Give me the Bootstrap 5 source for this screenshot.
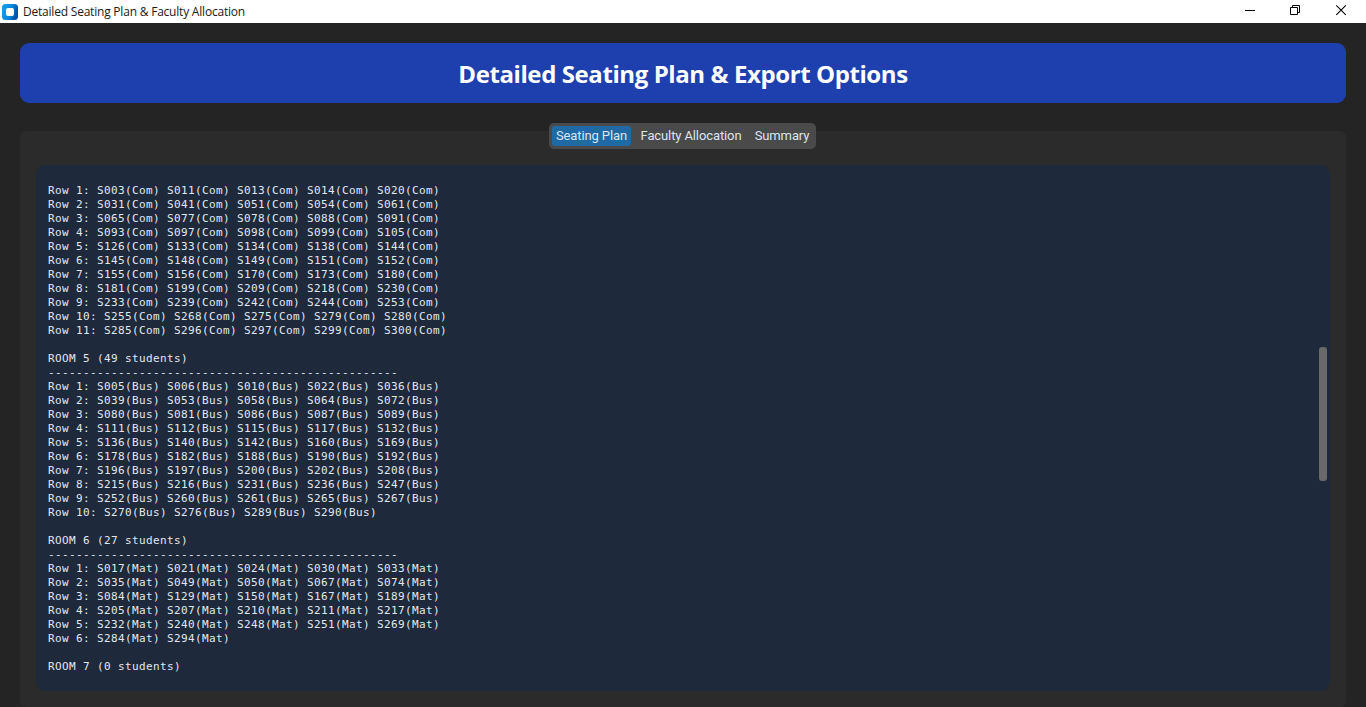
<!DOCTYPE html>
<html lang="en" data-bs-theme="dark">
<head>
<meta charset="utf-8">
<meta name="viewport" content="width=device-width, initial-scale=1">
<title>Detailed Seating Plan &amp; Faculty Allocation</title>
<link href="https://cdn.jsdelivr.net/npm/bootstrap@5.3.0/dist/css/bootstrap.min.css" rel="stylesheet">
<style>
body{background:#242424;font-family:"Open Sans","Noto Sans",sans-serif}
.titlebar{height:23px;background:#fff;color:#1a1a1a;padding-left:2px;font-size:12px;line-height:23px}
.titlebar .caption-text{margin-left:5px;letter-spacing:-.21px;white-space:nowrap}
.winctl{width:46px;height:23px}
.winctl.narrow{width:45px}
.winctl svg,.titlebar svg{display:block}
.main-area{padding:20px 20px 0}
.banner{height:60px;border-radius:9px;background:#1e40af;color:#fff}
.banner h1{font-size:24px;line-height:32px;letter-spacing:-.41px;padding-top:2px}
.seg{height:26px;padding:3px;margin:20px 1px 0 0;background:#4a4a4a;border-radius:5px;width:267px;position:relative;z-index:1}
.seg button{border:0;border-radius:3px;background:transparent;color:#dce4ee;font:13px/20px Roboto,sans-serif;letter-spacing:-.11px;padding:0;height:20px;white-space:nowrap}
.seg button.active{background:#1f6aa5}
.panel{margin-top:-18px;height:576px;background:#2b2b2b;border-radius:6px;padding:34px 16px 16px}
.viewer{height:526px;background:#1e293b;border-radius:9px;padding:19px 3px 0 12px}
.viewer pre{font:11px/14px "DejaVu Sans Mono",monospace;letter-spacing:.378px;color:#e2e8f0;overflow:hidden}
.thumb{width:8px;height:134px;margin-top:163px;border-radius:3px;background:#696969}
</style>
</head>
<body class="vh-100 overflow-hidden">
<header class="titlebar d-flex align-items-center">
  <svg width="16" height="16" viewBox="0 0 16 16"><defs><linearGradient id="g" x2="1" y2=".3"><stop offset=".2" stop-color="#0c9bf0"/><stop offset=".65" stop-color="#0784dc"/><stop offset="1" stop-color="#0450a0"/></linearGradient></defs><rect width="16" height="16" rx="3.5" fill="url(#g)"/><rect x="4" y="4" width="8" height="8" rx="2" fill="#fff"/></svg>
  <span class="caption-text">Detailed Seating Plan &amp; Faculty Allocation</span>
  <div class="d-flex ms-auto">
    <div class="winctl narrow"><svg width="45" height="23"><path d="M16 10.5h10" stroke="#000"/></svg></div>
    <div class="winctl"><svg width="46" height="23" fill="none" stroke="#000"><path d="M16.5 7.5h7v7h-7zM18.5 7.5v-2h7v7h-2"/></svg></div>
    <div class="winctl"><svg width="46" height="23"><path d="M16.3 5.3l9.5 9.5m0-9.5l-9.5 9.5" stroke="#000" stroke-width="1.1"/></svg></div>
  </div>
</header>
<main class="main-area">
  <div class="banner d-flex align-items-center justify-content-center"><h1 class="fw-bold mb-0">Detailed Seating Plan &amp; Export Options</h1></div>
  <div class="d-flex justify-content-center"><div class="seg d-flex" role="tablist">
    <button class="active" style="width:79px">Seating Plan</button>
    <button style="width:120px">Faculty Allocation</button>
    <button style="width:62px">Summary</button>
  </div></div>
  <section class="panel">
    <div class="viewer d-flex justify-content-between align-items-start">
<pre class="mb-0">Row 1: S003(Com) S011(Com) S013(Com) S014(Com) S020(Com)
Row 2: S031(Com) S041(Com) S051(Com) S054(Com) S061(Com)
Row 3: S065(Com) S077(Com) S078(Com) S088(Com) S091(Com)
Row 4: S093(Com) S097(Com) S098(Com) S099(Com) S105(Com)
Row 5: S126(Com) S133(Com) S134(Com) S138(Com) S144(Com)
Row 6: S145(Com) S148(Com) S149(Com) S151(Com) S152(Com)
Row 7: S155(Com) S156(Com) S170(Com) S173(Com) S180(Com)
Row 8: S181(Com) S199(Com) S209(Com) S218(Com) S230(Com)
Row 9: S233(Com) S239(Com) S242(Com) S244(Com) S253(Com)
Row 10: S255(Com) S268(Com) S275(Com) S279(Com) S280(Com)
Row 11: S285(Com) S296(Com) S297(Com) S299(Com) S300(Com)

ROOM 5 (49 students)
--------------------------------------------------
Row 1: S005(Bus) S006(Bus) S010(Bus) S022(Bus) S036(Bus)
Row 2: S039(Bus) S053(Bus) S058(Bus) S064(Bus) S072(Bus)
Row 3: S080(Bus) S081(Bus) S086(Bus) S087(Bus) S089(Bus)
Row 4: S111(Bus) S112(Bus) S115(Bus) S117(Bus) S132(Bus)
Row 5: S136(Bus) S140(Bus) S142(Bus) S160(Bus) S169(Bus)
Row 6: S178(Bus) S182(Bus) S188(Bus) S190(Bus) S192(Bus)
Row 7: S196(Bus) S197(Bus) S200(Bus) S202(Bus) S208(Bus)
Row 8: S215(Bus) S216(Bus) S231(Bus) S236(Bus) S247(Bus)
Row 9: S252(Bus) S260(Bus) S261(Bus) S265(Bus) S267(Bus)
Row 10: S270(Bus) S276(Bus) S289(Bus) S290(Bus)

ROOM 6 (27 students)
--------------------------------------------------
Row 1: S017(Mat) S021(Mat) S024(Mat) S030(Mat) S033(Mat)
Row 2: S035(Mat) S049(Mat) S050(Mat) S067(Mat) S074(Mat)
Row 3: S084(Mat) S129(Mat) S150(Mat) S167(Mat) S189(Mat)
Row 4: S205(Mat) S207(Mat) S210(Mat) S211(Mat) S217(Mat)
Row 5: S232(Mat) S240(Mat) S248(Mat) S251(Mat) S269(Mat)
Row 6: S284(Mat) S294(Mat)

ROOM 7 (0 students)</pre>
      <div class="thumb"></div>
    </div>
  </section>
</main>
<script src="https://cdn.jsdelivr.net/npm/bootstrap@5.3.0/dist/js/bootstrap.bundle.min.js"></script>
</body>
</html>
